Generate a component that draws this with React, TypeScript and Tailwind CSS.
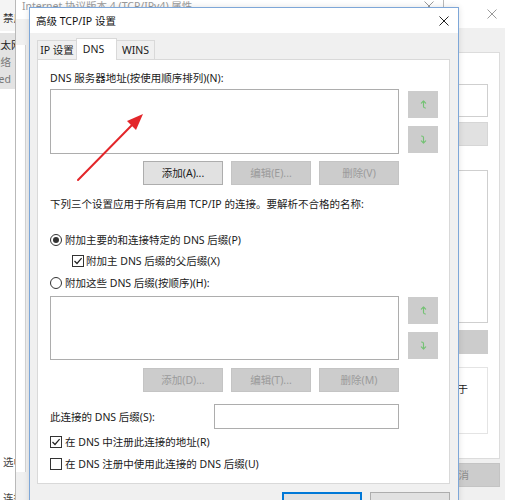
import React from "react";

function UpIcon() {
  return (
    <svg width="7" height="9" viewBox="0 0 8 10" fill="none" stroke="#74c274" strokeWidth="1.3" strokeLinecap="round" strokeLinejoin="round">
      <path d="M1.5 3.5 L4 1 L6.5 3.5" />
      <path d="M4 1.3 V7.3 Q4 9 6.2 9" />
    </svg>
  );
}

function DownIcon() {
  return (
    <svg width="7" height="9" viewBox="0 0 8 10" fill="none" stroke="#74c274" strokeWidth="1.3" strokeLinecap="round" strokeLinejoin="round">
      <path d="M1.8 1 Q4 1 4 2.7 V8.7" />
      <path d="M1.5 6.5 L4 9 L6.5 6.5" />
    </svg>
  );
}

function CloseX({ color, size = 10 }: { color: string; size?: number }) {
  return (
    <svg width={size} height={size} viewBox="0 0 10 10" fill="none" stroke={color} strokeWidth="1">
      <path d="M0.5 0.5 L9.5 9.5 M9.5 0.5 L0.5 9.5" />
    </svg>
  );
}

function SideButtons({ top }: { top: "a" | "b" }) {
  return (
    <div className={top === "a" ? "ml-[9px] flex flex-col gap-[8px] pt-[2px]" : "ml-[9px] flex flex-col gap-[8px] pt-[1px]"}>
      <div className="w-[30px] h-[27px] bg-[#cccccc] flex items-center justify-center">
        <UpIcon />
      </div>
      <div className="w-[30px] h-[27px] bg-[#cccccc] flex items-center justify-center">
        <DownIcon />
      </div>
    </div>
  );
}

function Btn({ children, disabled }: { children: React.ReactNode; disabled?: boolean }) {
  return disabled ? (
    <div className="w-[80px] h-[24px] flex items-center justify-center bg-[#cccccc] border border-[#c4c4c4] text-[#9b9b9b]">
      {children}
    </div>
  ) : (
    <div className="w-[80px] h-[24px] flex items-center justify-center bg-[#e1e1e1] border border-[#adadad] text-[#1a1a1a]">
      {children}
    </div>
  );
}

function Radio({ checked }: { checked?: boolean }) {
  return (
    <div className="w-[12px] h-[12px] rounded-full border border-[#333333] bg-white flex items-center justify-center shrink-0">
      {checked && <div className="w-[6px] h-[6px] rounded-full bg-[#333333]" />}
    </div>
  );
}

function Check({ checked }: { checked?: boolean }) {
  return (
    <div className="w-[12px] h-[12px] border border-[#333333] bg-white flex items-center justify-center shrink-0">
      {checked && (
        <svg width="10" height="10" viewBox="0 0 10 10" fill="none">
          <path d="M1.5 5 L4 7.5 L8.6 2.2" stroke="#222222" strokeWidth="1.2" />
        </svg>
      )}
    </div>
  );
}

export default function App() {
  return (
    <div className="relative w-[505px] h-[500px] overflow-hidden bg-white font-['Noto_Sans','Noto_Sans_CJK_SC',sans-serif] text-[10.5px] leading-[16px] text-[#1a1a1a]">
      {/* Network connections window (far back, left) */}
      <div className="absolute left-0 top-0 w-[15px] h-[500px] overflow-hidden bg-white">
        <div className="h-[31px] bg-[#f4f4f4] relative">
          <span className="absolute left-[3px] top-[10px] whitespace-nowrap text-[#333333]">禁用此网络设备</span>
        </div>
        <div className="mt-[2px] h-[56px] bg-[#e3e3e3] relative">
          <span className="absolute left-[-10px] top-[4px] whitespace-nowrap text-[#222222]">以太网</span>
          <span className="absolute left-[-10px] top-[21px] whitespace-nowrap text-[#777777]">网络</span>
          <div className="absolute left-0 top-[38px] w-[11px] flex justify-end whitespace-nowrap text-[#777777]">Disabled</div>
        </div>
        <span className="absolute left-[3px] top-[454px] whitespace-nowrap text-[#444444]">选中项</span>
        <span className="absolute left-[3px] top-[490px] whitespace-nowrap text-[#444444]">连接</span>
      </div>

      {/* Ethernet properties window (back, right) */}
      <div className="absolute left-[150px] top-0 w-[365px] h-[500px] bg-[#f0f0f0] flex flex-col">
        <div className="h-[28px] bg-white flex items-center justify-end pr-[18px]">
          <CloseX color="#9a9a9a" />
        </div>
        <div className="pt-[24px] pl-[8px] flex flex-col items-end pr-[15px]">
          <div className="w-[342px] h-[407px] bg-white border border-[#dcdcdc] flex flex-col items-end pr-[11px]">
            <div className="mt-[31px] w-[300px] h-[33px] border border-[#cfcfcf] bg-white" />
            <div className="mt-[5px] w-[300px] h-[24px] bg-[#e1e1e1] border border-[#d6d6d6]" />
            <div className="mt-[24px] w-[300px] h-[153px] border border-[#cfcfcf] bg-white" />
            <div className="mt-[7px] w-[300px] h-[24px] bg-[#cccccc]" />
            <div className="mt-[13px] w-[300px] h-[67px] border border-[#e4e4e4] bg-white pt-[13px] flex justify-end pr-[19px] overflow-hidden">
              <span className="whitespace-nowrap text-[#1a1a1a]">该协议是默认的广域网络协议，用于</span>
            </div>
          </div>
          <div className="mt-[4px] w-[83px] h-[24px] bg-[#cccccc] border border-[#c4c4c4] flex items-center justify-center text-[#8c8c8c]">
            取消
          </div>
        </div>
      </div>

      {/* IPv4 properties window (middle) */}
      <div className="absolute left-[15px] top-[-9px] w-[429px] h-[520px] bg-[#f0f0f0] border border-[#b9b9b9] flex flex-col">
        <div className="h-[27px] bg-white flex items-center justify-between pl-[6px] pr-[9px]">
          <span className="text-[#9a9a9a] whitespace-nowrap">Internet 协议版本 4 (TCP/IPv4) 属性</span>
          <CloseX color="#9a9a9a" />
        </div>
        <div className="pt-[26px]">
          <div className="w-[10px] h-[427px] bg-white border-r border-[#d4d4d4]" />
        </div>
      </div>

      {/* Advanced TCP/IP settings dialog (front) */}
      <div className="absolute left-[29px] top-[7px] w-[430px] h-[520px] border border-[#7ea7d8] bg-[#f0f0f0] flex flex-col shadow-[0_0_6px_rgba(0,0,0,0.12)]">
        <div className="h-[25px] bg-white flex items-center justify-between pl-[6px]">
          <span className="text-[#111111] whitespace-nowrap">高级 TCP/IP 设置</span>
          <div className="w-[28px] flex items-center justify-center">
            <CloseX color="#222222" />
          </div>
        </div>
        <div className="px-[7px] pt-[5px] flex flex-col">
          {/* Tabs */}
          <div className="flex items-end h-[21px]">
            <div className="w-[40px] h-[19px] border border-b-0 border-[#d9d9d9] bg-[#f0f0f0] flex items-center justify-center whitespace-nowrap">
              IP 设置
            </div>
            <div className="-ml-px w-[41px] h-[22px] -mb-px relative z-10 border border-b-0 border-[#d9d9d9] bg-white flex items-center justify-center pr-[6px] pb-[2px] whitespace-nowrap">
              DNS
            </div>
            <div className="-ml-px w-[39px] h-[19px] border border-b-0 border-[#d9d9d9] bg-[#f0f0f0] flex items-center justify-center whitespace-nowrap">
              WINS
            </div>
          </div>

          {/* Panel */}
          <div className="w-[413px] h-[425px] bg-white border border-[#d9d9d9] pl-[12px] flex flex-col">
            <div className="mt-[10px] h-[16px] whitespace-nowrap">DNS 服务器地址(按使用顺序排列)(N):</div>
            <div className="mt-[3px] flex">
              <div className="w-[349px] h-[65px] border border-[#adadad] bg-white" />
              <SideButtons top="a" />
            </div>
            <div className="mt-[7px] w-[349px] flex justify-end gap-[8px]">
              <Btn>添加(A)...</Btn>
              <Btn disabled>编辑(E)...</Btn>
              <Btn disabled>删除(V)</Btn>
            </div>
            <div className="mt-[11px] h-[16px] whitespace-nowrap">
              下列三个设置应用于所有启用 TCP/IP 的连接。要解析不合格的名称:
            </div>
            <div className="mt-[20px] h-[16px] flex items-center gap-[3px] whitespace-nowrap">
              <Radio checked />
              <span>附加主要的和连接特定的 DNS 后缀(P)</span>
            </div>
            <div className="mt-[5px] h-[16px] flex items-center gap-[2px] pl-[22px] whitespace-nowrap">
              <Check checked />
              <span>附加主 DNS 后缀的父后缀(X)</span>
            </div>
            <div className="mt-[6px] h-[16px] flex items-center gap-[3px] whitespace-nowrap">
              <Radio />
              <span>附加这些 DNS 后缀(按顺序)(H):</span>
            </div>
            <div className="mt-[5px] flex">
              <div className="w-[349px] h-[64px] border border-[#adadad] bg-white" />
              <SideButtons top="b" />
            </div>
            <div className="mt-[8px] w-[349px] flex justify-end gap-[8px]">
              <Btn disabled>添加(D)...</Btn>
              <Btn disabled>编辑(T)...</Btn>
              <Btn disabled>删除(M)</Btn>
            </div>
            <div className="mt-[12px] w-[349px] h-[25px] flex items-center justify-between">
              <span className="whitespace-nowrap">此连接的 DNS 后缀(S):</span>
              <div className="w-[185px] h-[25px] border border-[#adadad] bg-white" />
            </div>
            <div className="mt-[5px] h-[16px] flex items-center gap-[3px] whitespace-nowrap">
              <Check checked />
              <span>在 DNS 中注册此连接的地址(R)</span>
            </div>
            <div className="mt-[6px] h-[16px] flex items-center gap-[3px] whitespace-nowrap">
              <Check />
              <span>在 DNS 注册中使用此连接的 DNS 后缀(U)</span>
            </div>
          </div>

          {/* Bottom buttons */}
          <div className="mt-[8px] w-[413px] flex justify-end gap-[8px]">
            <div className="w-[80px] h-[23px] border-2 border-[#0078d7] bg-[#e1e1e1] flex items-center justify-center pt-[14px] text-[#1a1a1a]">
              确定
            </div>
            <div className="w-[80px] h-[23px] border border-[#adadad] bg-[#e1e1e1] flex items-center justify-center pt-[14px] text-[#1a1a1a]">
              取消
            </div>
          </div>
        </div>
      </div>

      {/* Red annotation arrow */}
      <svg className="absolute left-0 top-0 pointer-events-none" width="505" height="500" viewBox="0 0 505 500">
        <line x1="78" y1="180" x2="134" y2="123" stroke="#e3262a" strokeWidth="2" strokeLinecap="round" />
        <polygon points="143,114 127,121 136,130" fill="#e3262a" />
      </svg>
    </div>
  );
}
